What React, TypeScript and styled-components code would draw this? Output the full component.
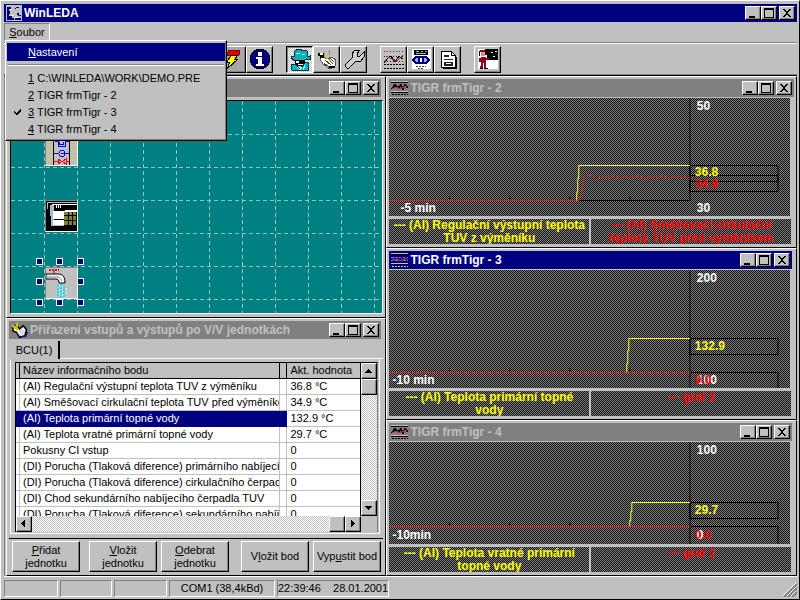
import React from 'react';
import styled, { createGlobalStyle, css } from 'styled-components';

const silver = '#c0c0c0';
const gray = '#808080';
const navy = '#000080';

const GlobalStyle = createGlobalStyle`
  * { box-sizing: border-box; }
  body {
    margin: 0;
    background: ${silver};
    color: #000;
    font: 11px/16px "Liberation Sans", Arial, sans-serif;
  }
  button { font: inherit; color: inherit; padding: 0; border-radius: 0; }
`;

const raised = css`
  border: 1px solid;
  border-color: #fff #000 #000 #fff;
  box-shadow: inset -1px -1px 0 ${gray};
`;

const sunken = css`
  border: 1px solid;
  border-color: ${gray} #fff #fff ${gray};
`;

const dither = css`
  background: repeating-conic-gradient(#101010 0 25%, #808080 0 50%) 0 0 / 2px 2px;
`;

const track = css`
  background: repeating-conic-gradient(#fff 0 25%, ${silver} 0 50%) 0 0 / 2px 2px;
`;

const Frame = styled.div`
  display: flex;
  flex-direction: column;
  min-height: 100vh;
  padding: 3px 2px 1px 3px;
  border: 1px solid;
  border-color: #fff #000 #000 #fff;
  background: ${silver};
`;

const TitleBar = styled.header<{ $active?: boolean; $inset?: boolean }>`
  display: flex;
  flex: none;
  align-items: center;
  height: 18px;
  margin-right: ${p => (p.$inset ? 2 : 0)}px;
  padding: 0 2px;
  background: ${p => (p.$active ? navy : gray)};
  color: ${p => (p.$active ? '#fff' : silver)};
`;

const TitleText = styled.h1`
  flex: 1;
  min-width: 0;
  margin: 0 0 0 2px;
  font-size: 12px;
  line-height: 18px;
  font-weight: bold;
  white-space: nowrap;
  overflow: hidden;
`;

const CaptionButtons = styled.div`
  display: flex;
  button:last-child { margin-left: 2px; }
`;

const CaptionButton = styled.button`
  display: flex;
  width: 16px;
  height: 14px;
  background: ${silver};
  ${raised}
`;

const Menu = styled.nav`
  position: relative;
  z-index: 5;
  display: flex;
  flex: none;
  height: 21px;
  padding-top: 1px;
  border-bottom: 1px solid ${gray};
`;

const MenuButton = styled.button`
  height: 18px;
  width: 46px;
  background: ${silver};
  line-height: 16px;
  ${sunken}
`;

const Popup = styled.div`
  position: absolute;
  top: 18px;
  left: 1px;
  width: 222px;
  padding: 2px 1px 3px;
  background: ${silver};
  ${raised}
`;

const PopupItem = styled.button<{ $hot?: boolean }>`
  display: flex;
  align-items: center;
  width: 100%;
  height: ${p => (p.$hot ? 18 : 17)}px;
  border: 0;
  background: ${p => (p.$hot ? navy : silver)};
  color: ${p => (p.$hot ? '#fff' : '#000')};
  white-space: pre;
`;

const CheckSlot = styled.span`
  display: flex;
  justify-content: center;
  width: 21px;
`;

const PopupRule = styled.hr`
  height: 2px;
  margin: 3px 1px;
  border: 0;
  border-top: 1px solid ${gray};
  border-bottom: 1px solid #fff;
`;

const Toolbar = styled.div`
  display: flex;
  flex: none;
  height: 32px;
  padding: 2px 0 0 215px;
  border-top: 1px solid #fff;
  border-bottom: 1px solid ${gray};
`;

const ToolGroup = styled.div`
  display: flex;
  margin-right: 13px;
`;

const ToolButton = styled.button<{ $pressed?: boolean; $dim?: boolean }>`
  display: flex;
  align-items: center;
  justify-content: center;
  width: 27px;
  height: 27px;
  background: ${p => (p.$dim ? '#a8a8a8' : silver)};
  ${raised}
  ${p => p.$pressed && css`
    ${track}
    border-color: #000 #fff #fff #000;
    box-shadow: inset 1px 1px 0 ${gray};
  `}
`;

const Workspace = styled.main`
  display: grid;
  flex: 1;
  grid-template-columns: 380fr 410fr;
  padding-left: 1px;
  border-left: 1px solid ${gray};
  border-top: 1px solid #000;
`;

const Column = styled.div`
  display: flex;
  flex-direction: column;
  min-width: 0;
`;

const Child = styled.section<{ $grow?: boolean }>`
  display: flex;
  flex-direction: column;
  flex: ${p => (p.$grow ? '1 0 auto' : 'none')};
  padding: 2px;
  border: 1px solid;
  border-color: #fff #000 #000 #fff;
  background: ${silver};
`;

const SchemeBody = styled.div`
  position: relative;
  flex: 1;
  min-height: 200px;
  margin: 3px 0 1px 1px;
  background: #008080;
  border: 1px solid;
  border-color: #000 #fff #fff #000;
  overflow: hidden;
`;

const Fill = styled.svg`
  display: block;
  position: absolute;
  inset: 0;
  width: 100%;
  height: 100%;
`;

const Node = styled.div<{ $y: number }>`
  position: absolute;
  left: 34px;
  top: ${p => p.$y}px;
  width: 33px;
  height: 32px;
  border: 1px solid;
  border-color: ${gray} #fff #fff ${gray};
  background: ${silver};
  svg { display: block; }
`;

const Handle = styled.i<{ $x: number; $y: number }>`
  position: absolute;
  left: ${p => p.$x}px;
  top: ${p => p.$y}px;
  width: 7px;
  height: 7px;
  background: ${navy};
  border: 1px solid #fff;
`;

const TabStrip = styled.div`
  display: flex;
  align-items: flex-end;
  height: 20px;
  padding-left: 1px;
`;

const Tab = styled.button`
  width: 50px;
  height: 18px;
  border: 0;
  border-right: 2px solid #000;
  background: ${silver};
  line-height: 14px;
`;

const TabLine = styled.div`
  flex: 1;
  border-bottom: 1px solid #fff;
`;

const TabPanel = styled.div`
  padding: 2px 1px 1px 4px;
  margin: 0 3px 4px 1px;
  border: 1px solid;
  border-color: transparent #fff #fff #fff;
`;

const GridBox = styled.div`
  display: grid;
  grid-template-columns: 1fr 16px;
  grid-template-rows: 153px 16px;
  border: 1px solid #000;
  border-right-color: ${gray};
  border-bottom: 0;
`;

const TableView = styled.div`
  overflow: hidden;
  background: #fff;
  border-right: 1px solid #000;
`;

const Table = styled.table`
  width: 100%;
  table-layout: fixed;
  border-collapse: separate;
  border-spacing: 0;
`;

const cell = css`
  height: 16px;
  padding: 0 0 0 3px;
  font-size: 11px;
  line-height: 15px;
  font-weight: normal;
  text-align: left;
  white-space: nowrap;
  overflow: hidden;
`;

const Th = styled.th`
  ${cell}
  background: ${silver};
  border-right: 1px solid #000;
  border-bottom: 1px solid #000;
  &:last-child { border-right: 0; }
`;

const Td = styled.td<{ $selected?: boolean }>`
  ${cell}
  border-right: 1px solid ${silver};
  border-bottom: 1px solid ${silver};
  &:last-child { border-right: 0; }
  ${p => p.$selected && css`
    background: ${navy};
    border-color: ${navy};
    color: #fff;
  `}
`;

const Scroll = styled.div<{ $horizontal?: boolean }>`
  display: flex;
  flex-direction: ${p => (p.$horizontal ? 'row' : 'column')};
  ${track}
`;

const Gap = styled.span`
  flex: 1;
`;

const ScrollButton = styled.button`
  display: flex;
  align-items: center;
  justify-content: center;
  flex: none;
  width: 16px;
  height: 16px;
  background: ${silver};
  ${raised}
`;

const Corner = styled.div`
  background: ${silver};
`;

const ButtonBar = styled.div`
  display: flex;
  height: 35px;
  padding: 2px 0 0 3px;
  border-top: 1px solid #000;
`;

const PushButton = styled.button<{ $after: number }>`
  flex: 0 1 68px;
  height: 31px;
  margin-right: ${p => p.$after}px;
  background: ${silver};
  line-height: 13px;
  white-space: nowrap;
  ${raised}
`;

const Plot = styled.div<{ $h: number }>`
  position: relative;
  flex: 1 0 ${p => p.$h}px;
  margin: 1px 4px 3px 0;
  ${dither}
`;

const PlotText = styled.span<{ $x: number; $y: number; $color?: string }>`
  position: absolute;
  left: ${p => p.$x}%;
  top: ${p => p.$y}%;
  color: ${p => p.$color || '#fff'};
  font-size: 12px;
  line-height: 14px;
  font-weight: bold;
  white-space: nowrap;
`;

const Legends = styled.div`
  display: grid;
  grid-template-columns: 1fr 1fr;
  gap: 2px;
  margin: 0 3px 1px 0;
`;

const Legend = styled.div<{ $color: string }>`
  height: 25px;
  overflow: hidden;
  ${dither}
  color: ${p => p.$color};
  font-size: 12px;
  line-height: 13px;
  font-weight: bold;
  text-align: center;
  white-space: pre-line;
`;

const Status = styled.footer`
  display: flex;
  flex: none;
  gap: 2px;
  height: 22px;
  padding: 3px 0 1px;
  border-top: 1px solid #fff;
`;

const StatusCell = styled.div<{ $w: number }>`
  flex: 0 1 ${p => p.$w}px;
  line-height: 15px;
  text-align: center;
  white-space: pre;
  ${sunken}
`;

const Grip = styled.svg`
  align-self: flex-end;
  margin-left: auto;
`;

function Captions() {
  const glyphs = [
    ['Minimalizovat', 'M3 9h6v2H3z'],
    ['Maximalizovat', 'M2 1h10v10H2zM3 3v7h8V3z'],
    ['Zavřít', 'M3 2h2v1h1v1h2V3h1V2h2v1h-1v1H9v1H8v2h1v1h1v1h1v1H9V9H8V8H6v1H5v1H3V9h1V8h1V7h1V5H5V4H4V3H3z'],
  ];
  return (
    <CaptionButtons>
      {glyphs.map(([label, d]) => (
        <CaptionButton key={label} aria-label={label}>
          <svg width="14" height="12" shapeRendering="crispEdges"><path d={d} fillRule="evenodd" /></svg>
        </CaptionButton>
      ))}
    </CaptionButtons>
  );
}

function AppLogo() {
  return (
    <svg width="16" height="16" shapeRendering="crispEdges">
      <path d="M0 0h16v16H0z" fill="#c0c0c0" />
      <path d="M1 2h4v2H3v2h1v3H3v2h3v2h2v2H1zM10 2h3v1h-3v1H9V3h1zM11 8h2v2h2v1h-3zM9 13h6v2H9z" fill={navy} />
      <path d="M4 4h2v1H4zM5 10h3v1H5zM9 12h3v1H9z" fill="#fff" />
    </svg>
  );
}

function GraphIcon({ light }: { light?: boolean }) {
  return (
    <svg width="17" height="16" shapeRendering="crispEdges">
      {!light && <path d="M0 2h17v9H0z" fill={gray} />}
      <path d="M0 1.5h17M0 11.500h17" stroke={silver} />
      <path d="M0 2.500h17M0 12.500h17" stroke="#000" />
      {light && <path d="M0 5.500h17M0 8.500h17" stroke="#8080c0" strokeDasharray="3 1" />}
      <path d="M1 9l3-4 3 3 3-3 2 4 2-4 3 3" fill="none" stroke={light ? '#4040a0' : '#000'} strokeWidth={light ? 1 : 2} />
      <path d="M1 9l4-2 3 2 3-1 5-2" fill="none" stroke="#c03040" />
      <path d="M1 14.500h16" stroke={light ? silver : '#000'} strokeDasharray="2 1" />
    </svg>
  );
}

function HandIcon() {
  return (
    <svg width="17" height="17" viewBox="0 0 22 22">
      <path d="M2 6l5-2 4 5 5-4 4 5-2 8-7 2-4-7-4-1z" fill="#fff" stroke="#000" strokeWidth="2" />
      <path d="M10 11l6 5M12 9l6 5M8 14l4 4" stroke={gray} />
      <path d="M1 4l8 6M8 1L7 8" stroke="#d0c000" strokeWidth="3" />
      <path d="M12 19l7-1 2-5" stroke={navy} strokeWidth="2" fill="none" />
    </svg>
  );
}

const toolIcons: Record<string, React.ReactNode> = {
  bolt: (
    <>
      <path d="M7 2h11l-1 5H5z" fill="#e00000" stroke="#800000" />
      <path d="M9 7h7l-3 4h3L5 21l3-7H5z" fill="#ff0" stroke="#000" />
    </>
  ),
  info: (
    <>
      <circle cx="11" cy="11" r="10" fill={navy} stroke="#000" />
      <path d="M9 4h4v4H9zM7 9h6v7h2v2H7v-2h2v-5H7z" fill="#fff" />
    </>
  ),
  agent: (
    <>
      <path d="M6 3l3-2h3v2l2-1 4 1v6l3-1v3h-3l-4 2H6l-4-3V8l3 1z" fill="#10b0b8" stroke="#003840" />
      <path d="M6 12h10v4l-3 2H9l-3-2z" fill="#000" />
      <path d="M7 13h3v2H7zM9 16h5v1H9z" fill="#fff" />
      <path d="M2 17l4-1 5 5 6-7h2v8H3z" fill="#00b8c0" stroke="#003840" />
      <path d="M8 19l3 3 2-3M16 17l-2 5M7 5h4M13 6h3" stroke="#90f8f8" />
    </>
  ),
  hand: (
    <>
      <path d="M7 8l4 3 5-2 4 3-1 6-5 3-7-5-3-5z" fill="#fff" stroke="#555" />
      <path d="M9 12l6 5M12 11l5 5M8 15l5 4M14 10l4 4" stroke="#444" />
      <path d="M2 5h6v5H4V8H2zM13 18h6v2h-6z" fill="#000" />
      <path d="M8 3l1 6 6 4" stroke="#c0b000" fill="none" />
      <path d="M13 2l1 5M4 6h3" stroke={gray} />
      <path d="M4 5h3v2H4z" fill="#fff" />
    </>
  ),
  wrench: (
    <path
      d="M2 17l7-7V6l3-4h5l-3 4v2h3l4-4v5l-3 4h-5l-7 7H4l-2-2z"
      fill="#d0d0d0"
      stroke="#000"
    />
  ),
  graph: (
    <>
      <path d="M1 3.500h20M1 8.500h20M1 13.500h20" stroke="#333" strokeDasharray="1 2" />
      <path d="M1 15l4-5 3-2 4 6 4-6 4 3" stroke="#000" fill="none" />
      <path d="M3 8l6 3 5 2 6-6" stroke="#a02030" fill="none" />
      <path d="M1 16.500h20M1 20.500h20" stroke="#000" strokeDasharray="2 1" />
    </>
  ),
  eye: (
    <>
      <path d="M2 1h19v20H2z" fill="#fff" />
      <path d="M4 2h14v5H4z" fill="#000" />
      <path d="M6 3.500h3M11 3.500h2M15 3.500h2M6 5.500h10" stroke="#60c8d0" />
      <path d="M1 12l5-4h10l5 4-5 4H6z" fill={navy} />
      <path d="M4 12l3-2h8l3 2-3 2H7z" fill="#a0a8f0" />
      <path d="M8 8h6v8H8z" fill={navy} />
      <path d="M10 10h2v4h-2z" fill="#fff" />
      <path d="M6 18.500h10M8 20.500h6" stroke="#404060" strokeDasharray="2 1" />
    </>
  ),
  document: (
    <>
      <path d="M4.500 3.500h10l4 4v12h-14z" fill="#fff" stroke="#000" />
      <path d="M14.500 3.500v4h4M6 20.500h13.500V9" fill="none" stroke="#000" />
      <path d="M7 7h5v2H7zM7 11h9v1H7zM7 14h9v4H7z" fill="#222" />
      <path d="M9 15h5v1H9z" fill="#fff" />
    </>
  ),
  person: (
    <>
      <path d="M1 1h20v20H1z" fill="#fff" />
      <path d="M8 1h13v11H10V7H8z" fill="#000" />
      <path d="M14 4h2M18 3h2M16 8h2" stroke="#fff" />
      <path d="M3 2h5v2H3zM4 9h5v6H4zM2 10h2v4H2zM9 10h3v2H9zM4 15h2v6H3zM7 15h2v6H7z" fill="#900020" />
      <path d="M4 4h4v4H4z" fill="#d89080" />
      <path d="M3 20h3v1H3zM7 20h4v1H7zM2 3h1v5H2z" fill="#000" />
    </>
  ),
};

function Tool({ name, label, pressed, dim }: { name: string; label: string; pressed?: boolean; dim?: boolean }) {
  return (
    <ToolButton aria-label={label} aria-pressed={pressed} $pressed={pressed} $dim={dim}>
      <svg width="22" height="23" fill="none" shapeRendering="crispEdges">{toolIcons[name]}</svg>
    </ToolButton>
  );
}

function FileMenu() {
  const files = ['C:\\WINLEDA\\WORK\\DEMO.PRE', 'TIGR frmTigr - 2', 'TIGR frmTigr - 3', 'TIGR frmTigr - 4'];
  return (
    <Menu>
      <MenuButton aria-expanded="true"><u>S</u>oubor</MenuButton>
      <Popup role="menu">
        <PopupItem role="menuitem" $hot><CheckSlot /><span><u>N</u>astavení</span></PopupItem>
        <PopupRule />
        {files.map((name, i) => (
          <PopupItem role="menuitem" key={name}>
            <CheckSlot>
              {i === 2 && (
                <svg width="9" height="8" shapeRendering="crispEdges">
                  <path d="M1 3h1v1h1v1h1V4h1V3h1V2h1V1h1v3H7v1H6v1H5v1H3V6H2V5H1z" />
                </svg>
              )}
            </CheckSlot>
            <span><u>{i + 1}</u> {name}</span>
          </PopupItem>
        ))}
      </Popup>
    </Menu>
  );
}

function Scheme() {
  const steps = Array.from({ length: 30 }, (_, i) => 33 * (i + 1));
  const handles = [
    [25, 157], [45, 157], [66, 157], [25, 177], [66, 177], [25, 198], [45, 198], [66, 198],
  ];
  return (
    <Child $grow>
      <TitleBar $inset><TitleText /><Captions /></TitleBar>
      <SchemeBody>
        <Fill stroke="#8cc8c8" strokeDasharray="4 3" shapeRendering="crispEdges">
          {steps.map(s => (
            <React.Fragment key={s}>
              <line x1={s + 0.5} x2={s + 0.5} y1="0" y2="100%" />
              <line x1="0" x2="100%" y1={s + 0.5} y2={s + 0.5} />
            </React.Fragment>
          ))}
        </Fill>
        <Node $y={33}>
          <svg width="31" height="30" fill="none" shapeRendering="crispEdges">
            <path d="M7.500 0v30M23.500 0v30" stroke="#000" />
            <path d="M1 3h6M1 8h6M1 13h6M1 18h6M1 23h6M2 27h5M25 3h6M25 8h6M25 13h6M25 18h6M25 23h6M25 27h4" stroke="#d8c040" />
            <path d="M9 6.500h3v5h7v-5h4M13 6.500v3h4v-3M8 18.500h5M19 18.500h4" stroke="#00f" />
            <circle cx="16" cy="18.500" r="3" stroke="#00f" />
            <path d="M15 18h3" stroke="#00f" />
            <path d="M8 26.500h4M20 26.500h3M12 24l8 5v-5l-8 5z" stroke="#f00" />
          </svg>
        </Node>
        <Node $y={99}>
          <svg width="31" height="30" shapeRendering="crispEdges">
            <path d="M0 0h31v30H0z" />
            <path d="M1 1h30v1H2v6H1zM4 4h4v19h10v2H5z" fill="#a8b8d8" />
            <path d="M6 3h25v1H6z" fill="#fff" />
            <path d="M10 5.500h6" stroke="#fff" strokeDasharray="1 1" strokeWidth="3" />
            <path d="M7 10h12v8H7zM7 19h11v5H7zM19 9h12v2H19z" fill="#fff" />
            <path d="M18 11h12v13H18z" fill="#808030" />
            <path d="M18 14.500h12M18 19.500h12M22.500 11v13M26.500 11v13" stroke="#000" />
          </svg>
        </Node>
        <Node $y={166}>
          <svg width="31" height="30" fill="none">
            <path d="M0 6h12c5 0 7 3 7 9h-6c0-3-1-4-4-4H0z" fill="#f4f4f4" stroke="#000" />
            <path d="M1 9h11c2 1 3 2 4 4" stroke={gray} />
            <path d="M3 2h10" stroke="#d02030" strokeWidth="2" strokeDasharray="2 1" />
            <path d="M8 2v4" stroke="#602020" />
            <path d="M12 17v13M15 16v14M18 18v12" stroke="#20d8e8" strokeWidth="2" strokeDasharray="2 1" />
            <path d="M13.500 17v12M16.500 18v11M20.500 20v9" stroke="#d0ffff" strokeDasharray="2 2" />
          </svg>
        </Node>
        {handles.map(([x, y]) => <Handle key={`${x}-${y}`} $x={x} $y={y} />)}
      </SchemeBody>
    </Child>
  );
}

const points: [string, string][] = [
  ['(AI) Regulační výstupní teplota TUV z výměníku', '36.8 °C'],
  ['(AI) Směšovací cirkulační teplota TUV před výměníkem', '34.9 °C'],
  ['(AI) Teplota primární topné vody', '132.9 °C'],
  ['(AI) Teplota vratné primární topné vody', '29.7 °C'],
  ['Pokusny CI vstup', '0'],
  ['(DI) Porucha (Tlaková diference) primárního nabíjecího', '0'],
  ['(DI) Porucha (Tlaková diference) cirkulačního čerpadla', '0'],
  ['(DI) Chod sekundárního nabíjecího čerpadla TUV', '0'],
  ['(DI) Porucha (Tlaková diference) sekundárního nabíjecího', '0'],
];

function Arrow({ d }: { d: string }) {
  return <svg width="8" height="8" shapeRendering="crispEdges"><path d={d} /></svg>;
}

function Assignments() {
  return (
    <Child>
      <TitleBar $inset>
        <HandIcon />
        <TitleText as="h2">Přiřazení vstupů a výstupů po V/V jednotkách</TitleText>
        <Captions />
      </TitleBar>
      <TabStrip><Tab role="tab" aria-selected="true">BCU(1)</Tab><TabLine /></TabStrip>
      <TabPanel>
        <GridBox>
          <TableView>
            <Table>
              <colgroup><col width="4" /><col /><col width="7" /><col width="73" /></colgroup>
              <thead>
                <tr><Th /><Th>Název informačního bodu</Th><Th /><Th>Akt. hodnota</Th></tr>
              </thead>
              <tbody>
                {points.map(([name, value], i) => (
                  <tr key={name}>
                    <Td $selected={i === 2} /><Td $selected={i === 2}>{name}</Td>
                    <Td $selected={i === 2} /><Td>{value}</Td>
                  </tr>
                ))}
              </tbody>
            </Table>
          </TableView>
          <Scroll>
            <ScrollButton aria-label="Nahoru"><Arrow d="M3 2h1v1h1v1h1v1h1v1H0V5h1V4h1V3h1z" /></ScrollButton>
            <ScrollButton aria-label="Posuvník" />
            <Gap />
            <ScrollButton aria-label="Dolů"><Arrow d="M0 2h7v1H6v1H5v1H4v1H3V5H2V4H1V3H0z" /></ScrollButton>
          </Scroll>
          <Scroll $horizontal>
            <ScrollButton aria-label="Vlevo"><Arrow d="M5 0v7H4V6H3V5H2V4H1V3h1V2h1V1h1V0z" /></ScrollButton>
            <Gap />
            <ScrollButton aria-label="Posuvník" />
            <ScrollButton aria-label="Vpravo"><Arrow d="M2 0v7h1V6h1V5h1V4h1V3H5V2H4V1H3V0z" /></ScrollButton>
          </Scroll>
          <Corner />
        </GridBox>
      </TabPanel>
      <ButtonBar>
        <PushButton $after={9}><u>P</u>řidat<br />jednotku</PushButton>
        <PushButton $after={4}><u>V</u>ložit<br />jednotku</PushButton>
        <PushButton $after={12}><u>O</u>debrat<br />jednotku</PushButton>
        <PushButton $after={4}>V<u>l</u>ožit bod</PushButton>
        <PushButton $after={0}>Vyp<u>u</u>stit bod</PushButton>
      </ButtonBar>
    </Child>
  );
}

type Label = { x: number; y: number; text: string; color?: string };
type Chart = {
  id: number;
  height: number;
  axis: number;
  yellow: string;
  red?: string;
  boxes: [number, number][];
  labels: Label[];
  legends: [string, string];
};

const charts: Chart[] = [
  {
    id: 2,
    height: 118,
    axis: 102,
    yellow: 'M187 102v-8h1V80h1V67h111',
    red: 'M189 102l3-8 2-15 3-2h7l4 3 5-2 5 2 6-3 6 3 6-2 6 2 6-3 6 3 6-2 6 2 6-3 6 3 6-2 6 2 6-3 5 3',
    boxes: [[67, 83], [77, 93]],
    labels: [
      { x: 11, y: 103, text: '-5 min' },
      { x: 307, y: 1, text: '50' },
      { x: 307, y: 103, text: '30' },
      { x: 305, y: 67, text: '36.8', color: '#ff0' },
      { x: 305, y: 79, text: '34.9', color: '#f00' },
    ],
    legends: ['--- (AI) Regulační výstupní teplota\nTUV z výměníku', '--- (AI) Směšovací cirkulační\nteplota TUV před výměníkem'],
  },
  {
    id: 3,
    height: 118,
    axis: 102,
    yellow: 'M237 102v-9h1V80h1V68h61',
    boxes: [[68, 84], [102, 122]],
    labels: [
      { x: 3, y: 103, text: '-10 min' },
      { x: 307, y: 1, text: '200' },
      { x: 307, y: 103, text: '100' },
      { x: 305, y: 69, text: '132.9', color: '#ff0' },
      { x: 305, y: 103, text: '0.0', color: '#f00' },
    ],
    legends: ['--- (AI) Teplota primární topné\nvody', '--- graf 2'],
  },
  {
    id: 4,
    height: 102,
    axis: 84,
    yellow: 'M240 84v-6h1V69h1v-9h58',
    boxes: [[60, 76], [84, 106]],
    labels: [
      { x: 3, y: 86, text: '-10min' },
      { x: 307, y: 1, text: '100' },
      { x: 307, y: 86, text: '0' },
      { x: 305, y: 61, text: '29.7', color: '#ff0' },
      { x: 305, y: 86, text: '0.0', color: '#f00' },
    ],
    legends: ['--- (AI) Teplota vratné primární\ntopné vody', '--- graf 2'],
  },
];

function Trend({ chart, last }: { chart: Chart; last: boolean }) {
  const { height, axis } = chart;
  const line = { vectorEffect: 'non-scaling-stroke' as const };
  return (
    <Child $grow={last}>
      <TitleBar $active={chart.id === 3} $inset={chart.id !== 2}>
        <GraphIcon light={chart.id === 3} />
        <TitleText as="h2">TIGR frmTigr - {chart.id}</TitleText>
        <Captions />
      </TitleBar>
      <Plot $h={height}>
        <Fill viewBox={`0 0 400 ${height}`} preserveAspectRatio="none" fill="none" shapeRendering="crispEdges">
          <g transform="translate(.5 .5)">
            <path {...line} d={`M300 0V${axis}M300 ${axis}H180`} stroke="#000" />
            <path {...line} d={[60, 120, 180, 240].map(x => `M${x} ${axis}v-4`).join('')} stroke="#000" />
            {chart.boxes.map(([top, bottom]) => (
              <path {...line} key={top} d={`M300 ${top}H388V${bottom}H300z`} stroke="#000" />
            ))}
            <path {...line} d={`M0 ${axis}H${chart.red ? 189 : 300}`} stroke="#e02020" />
            {chart.red && <path {...line} d={chart.red} stroke="#e02020" />}
            <path {...line} d={chart.yellow} stroke="#ff0" />
          </g>
        </Fill>
        {chart.labels.map(l => (
          <PlotText key={l.text + l.y} $x={l.x / 4} $y={(l.y / height) * 100} $color={l.color}>{l.text}</PlotText>
        ))}
      </Plot>
      <Legends>
        <Legend $color="#ff0">{chart.legends[0]}</Legend>
        <Legend $color="#f00">{chart.legends[1]}</Legend>
      </Legends>
    </Child>
  );
}

export default function App() {
  return (
    <>
      <GlobalStyle />
      <Frame>
        <TitleBar $active><AppLogo /><TitleText>WinLEDA</TitleText><Captions /></TitleBar>
        <FileMenu />
        <Toolbar role="toolbar">
          <ToolGroup>
            <Tool name="bolt" label="Spojení" dim />
            <Tool name="info" label="Informace" />
          </ToolGroup>
          <ToolGroup>
            <Tool name="agent" label="Monitor" pressed />
            <Tool name="hand" label="Přiřazení" />
            <Tool name="wrench" label="Nástroje" />
          </ToolGroup>
          <ToolGroup>
            <Tool name="graph" label="Graf" />
            <Tool name="eye" label="Náhled" />
            <Tool name="document" label="Dokument" />
          </ToolGroup>
          <ToolGroup><Tool name="person" label="Konec" /></ToolGroup>
        </Toolbar>
        <Workspace>
          <Column><Scheme /><Assignments /></Column>
          <Column>{charts.map((c, i) => <Trend key={c.id} chart={c} last={i === charts.length - 1} />)}</Column>
        </Workspace>
        <Status>
          <StatusCell $w={54} /><StatusCell $w={52} /><StatusCell $w={53} />
          <StatusCell $w={106}>COM1 (38,4kBd)</StatusCell>
          <StatusCell $w={112}>22:39:46    28.01.2001</StatusCell>
          <Grip width="14" height="14">
            <path d="M1 14L14 1M5 14l9-9M9 14l5-5" stroke={gray} strokeWidth="2" />
            <path d="M0 13L13 0M4 13l9-9M8 13l5-5" stroke="#fff" />
          </Grip>
        </Status>
      </Frame>
    </>
  );
}
